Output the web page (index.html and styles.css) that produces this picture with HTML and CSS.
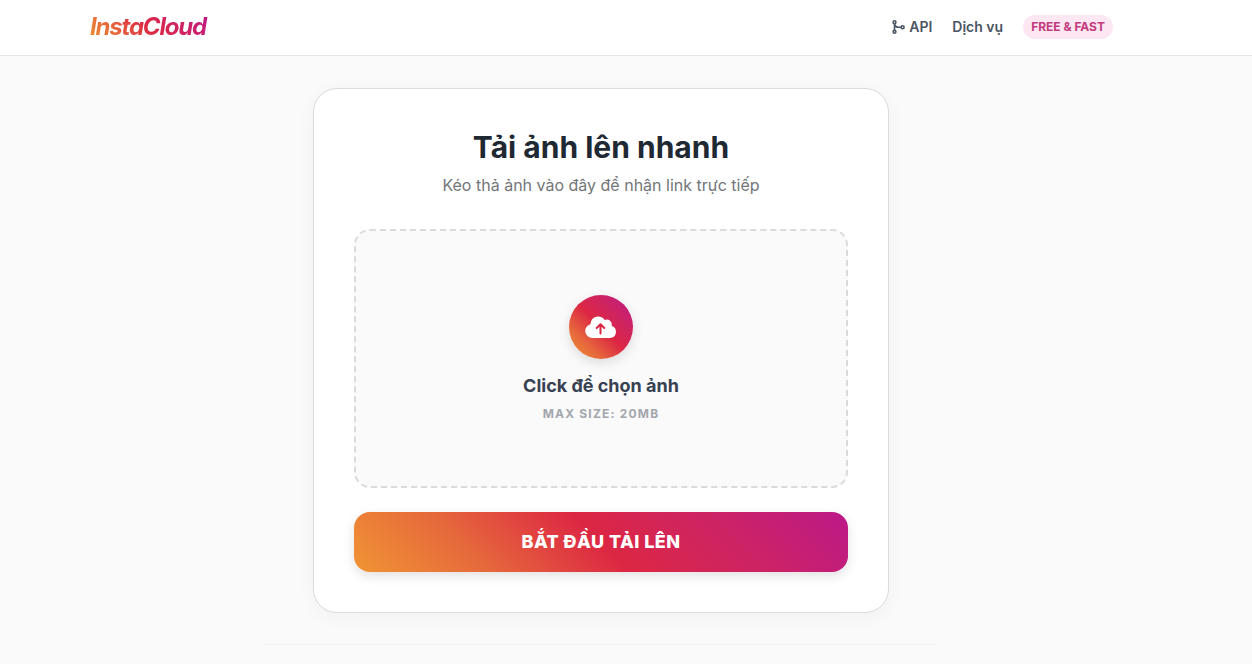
FILE: index.html
```html
<!DOCTYPE html>
<html lang="vi">
<head>
<meta charset="utf-8">
<meta name="viewport" content="width=device-width, initial-scale=1">
<title>InstaCloud</title>
<link rel="stylesheet" href="styles.css">
</head>
<body>
<header class="header">
  <div class="header-inner">
    <a class="logo" href="#">InstaCloud</a>
    <nav class="nav">
      <a class="nav-link" href="#">
        <svg class="nav-icon" viewBox="0 0 14 14" fill="none" stroke="currentColor" stroke-width="1.6" aria-hidden="true">
          <circle cx="3.500" cy="2.200" r="1.400"/>
          <circle cx="3.500" cy="11.800" r="1.400"/>
          <circle cx="11.600" cy="7.200" r="1.500"/>
          <path d="M3.500 3.600v6.800M3.500 4.200c.5 2 1.800 3 3.800 3h2.800"/>
        </svg>
        API
      </a>
      <a class="nav-link" href="#">Dịch vụ</a>
      <span class="badge">FREE &amp; FAST</span>
    </nav>
  </div>
</header>
<main class="main">
  <section class="card">
    <h1 class="title">Tải ảnh lên nhanh</h1>
    <p class="subtitle">Kéo thả ảnh vào đây để nhận link trực tiếp</p>
    <button class="dropzone" type="button">
      <span class="upload-icon">
        <svg class="cloud" viewBox="0 0 32 24" aria-hidden="true">
          <path fill="#fff" d="M7.500 23A7 7 0 0 1 5.600 9.200C5.600 4.500 9 1.500 13.300 1.500c2.800 0 5.100 1.300 6.400 3.500a5 5 0 0 1 6.900 5.900A6.200 6.200 0 0 1 25.200 23z"/>
          <path fill="none" stroke="#dc2743" stroke-width="2" stroke-linecap="round" stroke-linejoin="round" d="M15.500 18.500V9.500M11.700 13l3.800-3.800 3.800 3.800"/>
        </svg>
      </span>
      <span class="drop-label">Click để chọn ảnh</span>
      <span class="drop-hint">MAX SIZE: 20MB</span>
    </button>
    <button class="submit" type="button">BẮT ĐẦU TẢI LÊN</button>
  </section>
  <hr class="divider">
</main>
</body>
</html>
```
FILE: styles.css
```css
:root {
  --brand: linear-gradient(45deg, #f09433 0%, #e6683c 25%, #dc2743 50%, #cc2366 75%, #bc1888 100%);
}

* {
  box-sizing: border-box;
}

body {
  margin: 0;
  min-height: 100vh;
  background: #fafafa;
  color: #1f2933;
  font-family: Inter, "Liberation Sans", sans-serif;
  font-size: 16px;
  line-height: 24px;
}

button {
  font: inherit;
  color: inherit;
  cursor: pointer;
}

.header {
  padding: 0 66px 0 16px;
  background: #fff;
  border-bottom: 1px solid #e5e7eb;
}

.header-inner {
  display: flex;
  align-items: center;
  justify-content: space-between;
  max-width: 1024px;
  margin: 0 auto;
  padding: 11px 0 12px;
}

.logo {
  padding: 0 2px 0 1px;
  background: var(--brand);
  background-clip: text;
  -webkit-background-clip: text;
  color: transparent;
  font-size: 24px;
  line-height: 32px;
  font-weight: 700;
  font-style: italic;
  letter-spacing: -0.05em;
  text-decoration: none;
}

.nav {
  display: flex;
  align-items: center;
  gap: 20px;
}

.nav-link {
  display: flex;
  align-items: center;
  gap: 4px;
  color: #4b5563;
  font-size: 14px;
  line-height: 20px;
  font-weight: 600;
  text-decoration: none;
}

.nav-icon {
  width: 14px;
  height: 14px;
}

.badge {
  padding: 4px 8px;
  border-radius: 12px;
  background: #fce7f3;
  color: #c43a7e;
  font-size: 12px;
  line-height: 16px;
  font-weight: 700;
}

.main {
  padding: 32px 66px 16px 16px;
}

.card {
  max-width: 576px;
  margin: 0 auto;
  padding: 40px;
  background: #fff;
  border: 1px solid #dbdbdb;
  border-radius: 24px;
  box-shadow: 0 4px 20px rgba(0, 0, 0, 0.04);
  text-align: center;
}

.title {
  margin: 0 0 8px;
  font-size: 30px;
  line-height: 36px;
  font-weight: 700;
}

.subtitle {
  margin: 0 0 32px;
  color: #737679;
}

.dropzone {
  display: flex;
  flex-direction: column;
  align-items: center;
  width: 100%;
  margin-bottom: 24px;
  padding: 64px 24px;
  background: #fafafa;
  border: 2px dashed #dbdbdb;
  border-radius: 16px;
}

.upload-icon {
  display: flex;
  align-items: center;
  justify-content: center;
  width: 64px;
  height: 64px;
  margin-bottom: 13px;
  border-radius: 50%;
  background: var(--brand);
  box-shadow: 0 4px 12px rgba(0, 0, 0, 0.12);
}

.cloud {
  width: 32px;
  height: 24px;
}

.drop-label {
  margin-bottom: 6px;
  color: #374151;
  font-size: 18px;
  line-height: 28px;
  font-weight: 700;
}

.drop-hint {
  color: #a3a7ad;
  font-size: 12px;
  line-height: 16px;
  font-weight: 700;
  letter-spacing: 0.1em;
}

.submit {
  width: 100%;
  padding: 16px;
  border: 0;
  border-radius: 16px;
  background: var(--brand);
  box-shadow: 0 4px 12px rgba(0, 0, 0, 0.12);
  color: #fff;
  font-size: 18px;
  line-height: 28px;
  font-weight: 800;
  letter-spacing: 0.025em;
}

.divider {
  max-width: 672px;
  margin: 31px auto 0;
  border: 0;
  border-top: 1px solid #f3f4f6;
}
```
